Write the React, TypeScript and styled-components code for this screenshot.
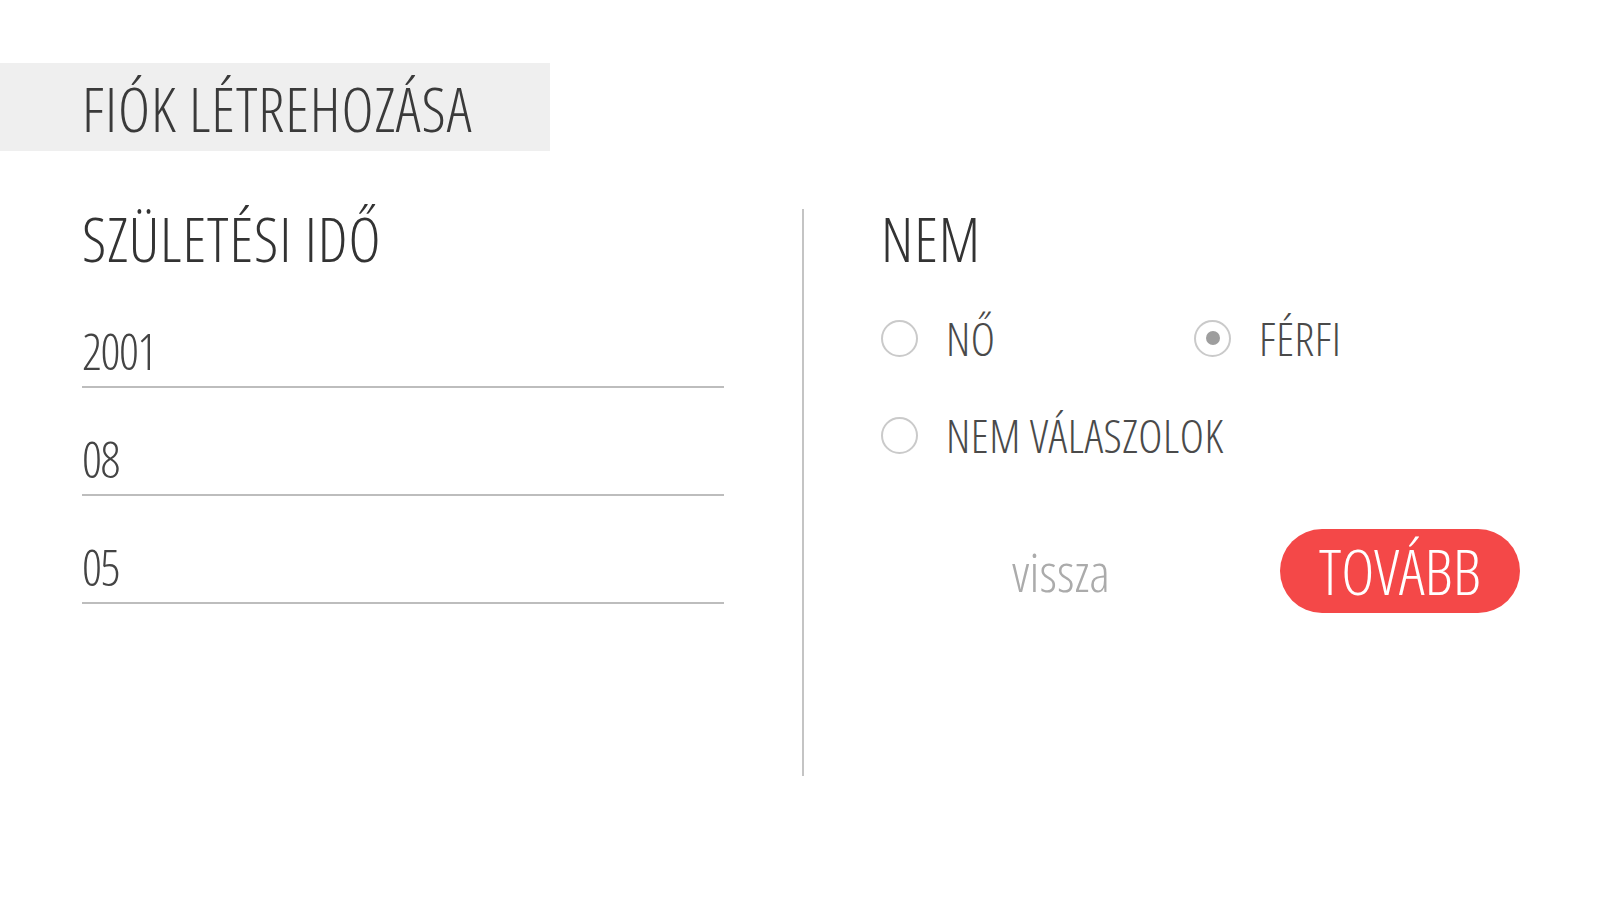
import React from "react";
import styled, { createGlobalStyle } from "styled-components";

const GlobalStyle = createGlobalStyle`
  html, body {
    margin: 0;
    padding: 0;
    background: #ffffff;
  }
  body {
    font-family: "Open Sans", "Noto Sans", sans-serif;
    font-weight: 300;
    font-stretch: 75%;
    color: #333333;
  }
  * { box-sizing: border-box; }
`;

const Page = styled.div`
  width: 1600px;
  height: 900px;
  padding-top: 63px;
  overflow: hidden;
`;

const TitleBar = styled.div`
  width: 550px;
  height: 88px;
  background: #efefef;
  padding-left: 82px;
  padding-top: 4px;
  display: flex;
  align-items: center;
`;

const Title = styled.h1`
  margin: 0;
  font-size: 61px;
  line-height: 60px;
  font-weight: 300;
  font-stretch: 75%;
  letter-spacing: 0.9px;
  color: #3a3a3a;
  white-space: nowrap;
`;

const Body = styled.div`
  margin-top: 58px;
  padding-left: 82px;
  display: grid;
  grid-template-columns: 642px 2px 638px;
  column-gap: 78px;
  min-height: 567px;
`;

const Column = styled.section`
  display: flex;
  flex-direction: column;
`;

const Divider = styled.div`
  width: 2px;
  background: #c4c4c4;
  align-self: stretch;
`;

const RightColumn = styled(Column)`
  margin-left: -1px;
`;

const SectionHeading = styled.h2`
  margin: 0;
  font-size: 61px;
  line-height: 60px;
  font-weight: 300;
  font-stretch: 75%;
  letter-spacing: 0.9px;
  color: #333333;
  white-space: nowrap;
`;

const Fields = styled.div`
  margin-top: 52px;
  display: flex;
  flex-direction: column;
  gap: 41px;
`;

const Field = styled.input`
  display: block;
  width: 100%;
  height: 67px;
  padding: 0 0 5px 0;
  border: none;
  border-bottom: 2px solid #bdbdbd;
  outline: none;
  background: transparent;
  font-family: "Open Sans", "Noto Sans", sans-serif;
  font-weight: 300;
  font-stretch: 75%;
  font-size: 49px;
  letter-spacing: -1.5px;
  color: #444444;
`;

const RadioGrid = styled.div`
  margin-top: 39px;
  display: grid;
  grid-template-columns: 313px 1fr;
  row-gap: 37px;
`;

const RadioOption = styled.label<{ $wide?: boolean }>`
  display: flex;
  align-items: center;
  gap: 28px;
  height: 60px;
  grid-column: ${(p) => (p.$wide ? "1 / span 2" : "auto")};
  cursor: pointer;
`;

const RadioCircle = styled.span<{ $checked?: boolean }>`
  width: 37px;
  height: 37px;
  flex: none;
  border-radius: 50%;
  border: 2px solid #cacaca;
  display: flex;
  align-items: center;
  justify-content: center;
  &::after {
    content: "";
    width: 14px;
    height: 14px;
    border-radius: 50%;
    background: ${(p) => (p.$checked ? "#9e9e9e" : "transparent")};
  }
`;

const RadioLabel = styled.span`
  font-size: 46px;
  line-height: 60px;
  font-weight: 300;
  font-stretch: 75%;
  letter-spacing: 0.5px;
  color: #4a4a4a;
  white-space: nowrap;
`;

const Actions = styled.div`
  margin-top: 64px;
  display: flex;
  align-items: center;
  justify-content: flex-end;
  gap: 170px;
`;

const BackLink = styled.a`
  font-size: 54px;
  line-height: 60px;
  font-weight: 300;
  font-stretch: 75%;
  color: #ababab;
  text-decoration: none;
  cursor: pointer;
`;

const NextButton = styled.button`
  width: 240px;
  height: 84px;
  border: none;
  border-radius: 42px;
  background: #f44848;
  color: #ffffff;
  font-family: "Open Sans", "Noto Sans", sans-serif;
  font-weight: 300;
  font-stretch: 75%;
  font-size: 63px;
  line-height: 84px;
  padding: 0;
  cursor: pointer;
`;

export default function App() {
  return (
    <>
      <GlobalStyle />
      <Page>
        <TitleBar>
          <Title>FIÓK LÉTREHOZÁSA</Title>
        </TitleBar>
        <Body>
          <Column>
            <SectionHeading>SZÜLETÉSI IDŐ</SectionHeading>
            <Fields>
              <Field defaultValue="2001" aria-label="év" />
              <Field defaultValue="08" aria-label="hónap" />
              <Field defaultValue="05" aria-label="nap" />
            </Fields>
          </Column>
          <Divider />
          <RightColumn>
            <SectionHeading>NEM</SectionHeading>
            <RadioGrid>
              <RadioOption>
                <RadioCircle />
                <RadioLabel>NŐ</RadioLabel>
              </RadioOption>
              <RadioOption>
                <RadioCircle $checked />
                <RadioLabel>FÉRFI</RadioLabel>
              </RadioOption>
              <RadioOption $wide>
                <RadioCircle />
                <RadioLabel>NEM VÁLASZOLOK</RadioLabel>
              </RadioOption>
            </RadioGrid>
            <Actions>
              <BackLink>vissza</BackLink>
              <NextButton>TOVÁBB</NextButton>
            </Actions>
          </RightColumn>
        </Body>
      </Page>
    </>
  );
}
